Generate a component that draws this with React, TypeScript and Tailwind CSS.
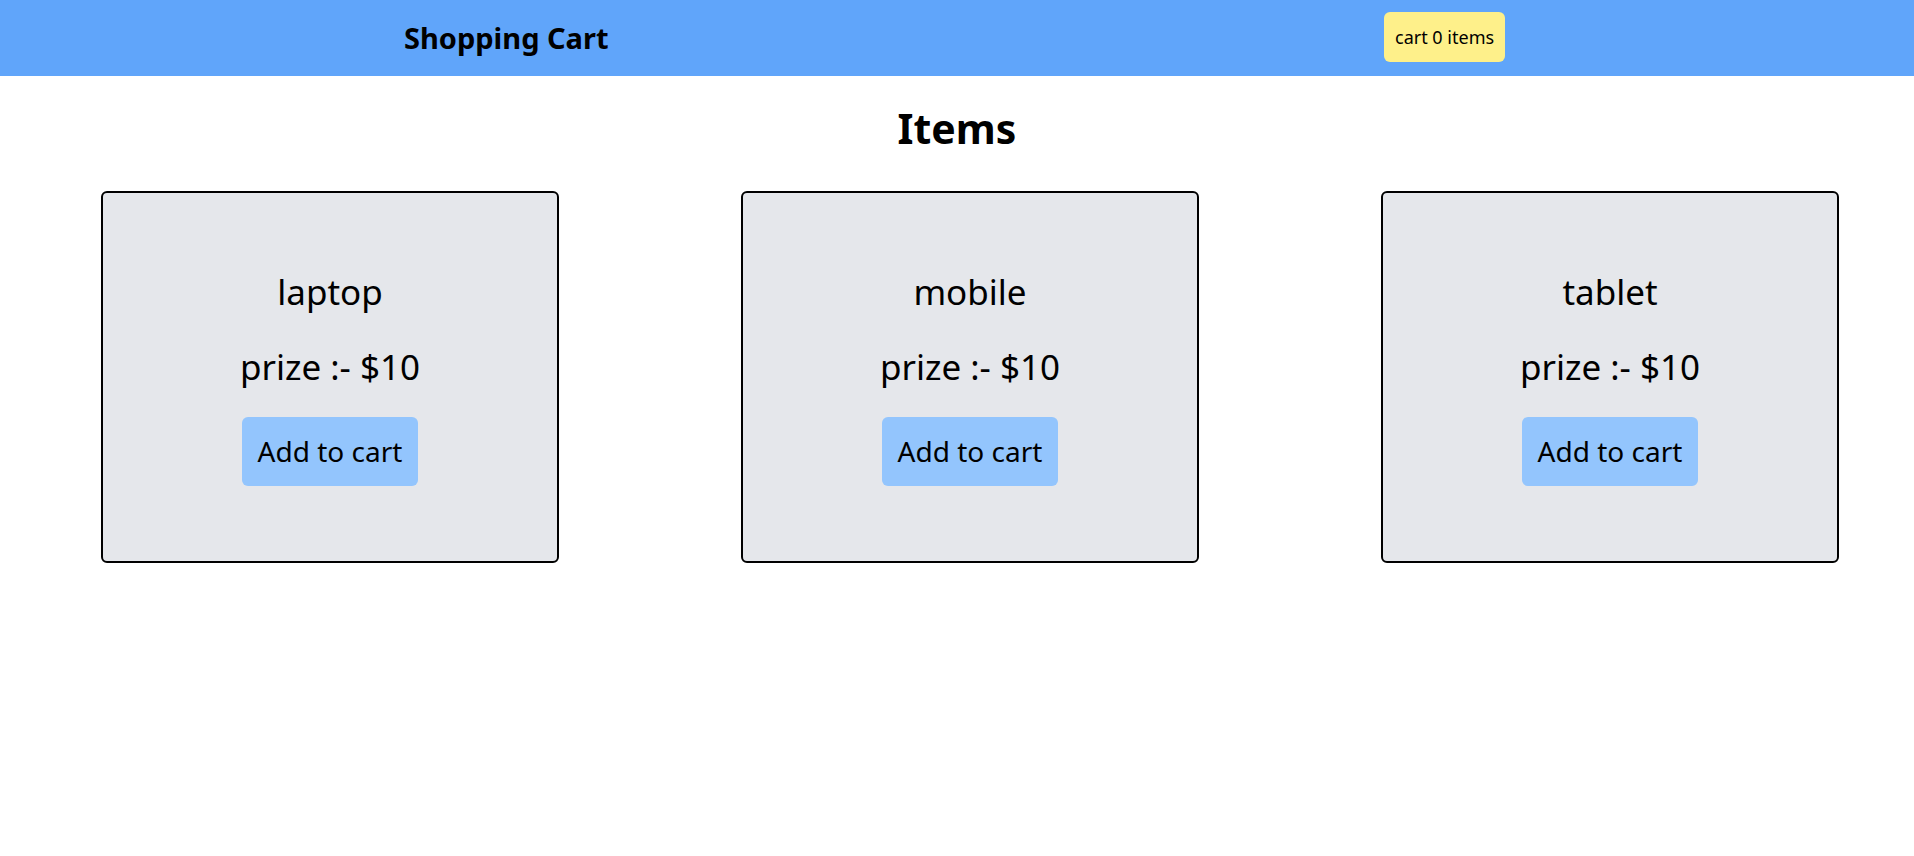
import React, { useState } from "react";

const products = [
    { id: 1, name: "laptop", prize: 10 },
    { id: 2, name: "mobile", prize: 10 },
    { id: 3, name: "tablet", prize: 10 },
];

export default function App() {
    const [cart, setCart] = useState(0);

    return (
        <div className="min-h-screen bg-white text-black font-['Noto_Sans',sans-serif]">
            {/* Header */}
            <header className="h-[76px] bg-[#60a5fa] flex items-center pl-[404px]">
                <h1 className="w-[980px] text-[29px] font-bold">Shopping Cart</h1>
                <div className="-mt-[3px] bg-[#fef08a] rounded-md px-[11px] py-[11px] text-[18px] leading-[28px]">
                    cart {cart} items
                </div>
            </header>

            <h2 className="mt-[24px] text-center text-[41px] leading-[56px] font-bold">Items</h2>

            {/* Products */}
            <div className="flex pl-[101px] gap-[182px] mt-[35px]">
                {products.map((p) => (
                    <div
                        key={p.id}
                        className="w-[458px] h-[372px] border-2 border-black rounded-[6px] bg-[#e5e7eb] flex flex-col items-center justify-center"
                    >
                        <p className="text-[35px] leading-[45px]">{p.name}</p>
                        <p className="mt-[30px] text-[35px] leading-[45px]">prize :- ${p.prize}</p>
                        <button
                            onClick={() => setCart(cart + 1)}
                            className="mt-[28px] px-4 py-4 rounded-[6px] bg-[#93c5fd] text-[28px] leading-[37px]"
                        >
                            Add to cart
                        </button>
                    </div>
                ))}
            </div>
        </div>
    );
}
